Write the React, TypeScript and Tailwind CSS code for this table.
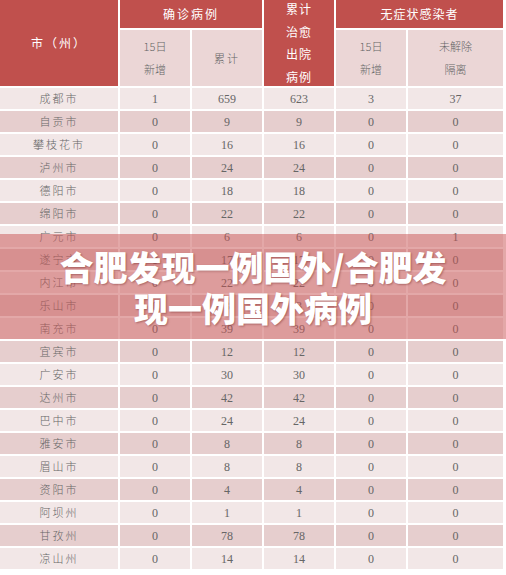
import React from "react"

interface Row {
  city: string
  newCases: number
  total: number
  cured: number
  asymNew: number
  asymIso: number
}

const rows: Row[] = [
  { city: "成都市", newCases: 1, total: 659, cured: 623, asymNew: 3, asymIso: 37 },
  { city: "自贡市", newCases: 0, total: 9, cured: 9, asymNew: 0, asymIso: 0 },
  { city: "攀枝花市", newCases: 0, total: 16, cured: 16, asymNew: 0, asymIso: 0 },
  { city: "泸州市", newCases: 0, total: 24, cured: 24, asymNew: 0, asymIso: 0 },
  { city: "德阳市", newCases: 0, total: 18, cured: 18, asymNew: 0, asymIso: 0 },
  { city: "绵阳市", newCases: 0, total: 22, cured: 22, asymNew: 0, asymIso: 0 },
  { city: "广元市", newCases: 0, total: 6, cured: 6, asymNew: 0, asymIso: 1 },
  { city: "遂宁市", newCases: 0, total: 17, cured: 17, asymNew: 0, asymIso: 0 },
  { city: "内江市", newCases: 0, total: 22, cured: 22, asymNew: 0, asymIso: 0 },
  { city: "乐山市", newCases: 0, total: 3, cured: 3, asymNew: 0, asymIso: 0 },
  { city: "南充市", newCases: 0, total: 39, cured: 39, asymNew: 0, asymIso: 0 },
  { city: "宜宾市", newCases: 0, total: 12, cured: 12, asymNew: 0, asymIso: 0 },
  { city: "广安市", newCases: 0, total: 30, cured: 30, asymNew: 0, asymIso: 0 },
  { city: "达州市", newCases: 0, total: 42, cured: 42, asymNew: 0, asymIso: 0 },
  { city: "巴中市", newCases: 0, total: 24, cured: 24, asymNew: 0, asymIso: 0 },
  { city: "雅安市", newCases: 0, total: 8, cured: 8, asymNew: 0, asymIso: 0 },
  { city: "眉山市", newCases: 0, total: 8, cured: 8, asymNew: 0, asymIso: 0 },
  { city: "资阳市", newCases: 0, total: 4, cured: 4, asymNew: 0, asymIso: 0 },
  { city: "阿坝州", newCases: 0, total: 1, cured: 1, asymNew: 0, asymIso: 0 },
  { city: "甘孜州", newCases: 0, total: 78, cured: 78, asymNew: 0, asymIso: 0 },
  { city: "凉山州", newCases: 0, total: 14, cured: 14, asymNew: 0, asymIso: 0 },
]

const cjk = "font-['SimSun','Noto_Sans_CJK_SC',sans-serif]"
const num = "font-['Liberation_Serif','Noto_Sans_CJK_SC',serif]"

export default function App() {
  return (
    <div className="relative w-[506px] h-[575px] bg-white overflow-hidden">
      <div className="grid w-[503px] grid-cols-[118px_70px_70px_70px_70px_95px] grid-rows-[28px_56px] auto-rows-[21px] gap-[2px] bg-white">
        {/* header */}
        <div className={`row-span-2 bg-[#c0504d] flex items-center justify-center text-white text-[12px] tracking-[2px] ${cjk}`}>
          市（州）
        </div>
        <div className={`col-span-2 bg-[#c0504d] flex items-center justify-center text-white text-[12px] tracking-[2px] ${cjk}`}>
          确诊病例
        </div>
        <div className={`row-span-2 bg-[#c0504d] flex flex-col items-center justify-center text-white text-[12px] leading-[22.5px] tracking-[1px] ${cjk}`}>
          <span>累计</span>
          <span>治愈</span>
          <span>出院</span>
          <span>病例</span>
        </div>
        <div className={`col-span-2 bg-[#c0504d] flex items-center justify-center text-white text-[12px] tracking-[1px] ${cjk}`}>
          无症状感染者
        </div>
        <div className={`bg-[#ebd6d6] flex flex-col items-center justify-center text-[#666] font-light text-[11px] leading-[23px] ${cjk}`}>
          <span>15日</span>
          <span>新增</span>
        </div>
        <div className={`bg-[#ebd6d6] flex items-center justify-center text-[#666] font-light text-[11px] tracking-[2px] ${cjk}`}>
          累计
        </div>
        <div className={`bg-[#ebd6d6] flex flex-col items-center justify-center text-[#666] font-light text-[11px] leading-[23px] ${cjk}`}>
          <span>15日</span>
          <span>新增</span>
        </div>
        <div className={`bg-[#ebd6d6] flex flex-col items-center justify-center text-[#666] font-light text-[11px] leading-[23px] ${cjk}`}>
          <span>未解除</span>
          <span>隔离</span>
        </div>

        {/* body */}
        {rows.map((r, i) => {
          const bg = i % 2 === 0 ? "bg-[#f2e7e7]" : "bg-[#e6cece]"
          const cell = `${bg} flex items-center justify-center text-[#666]`
          return (
            <React.Fragment key={r.city}>
              <div className={`${cell} text-[11px] font-light tracking-[2px] ${cjk}`}>{r.city}</div>
              <div className={`${cell} text-[12px] ${num}`}>{r.newCases}</div>
              <div className={`${cell} text-[12px] ${num}`}>{r.total}</div>
              <div className={`${cell} text-[12px] ${num}`}>{r.cured}</div>
              <div className={`${cell} text-[12px] ${num}`}>{r.asymNew}</div>
              <div className={`${cell} text-[12px] ${num}`}>{r.asymIso}</div>
            </React.Fragment>
          )
        })}
      </div>

      {/* title banner */}
      <div className="absolute left-0 top-[234px] w-[506px] h-[105px] bg-[#c85252]/50 flex items-center justify-center">
        <p className="text-center text-white text-[34px] leading-[41px] font-black font-['Noto_Sans_CJK_SC',sans-serif] [text-shadow:1px_1px_2px_rgba(80,0,0,0.35)]">
          合肥发现一例国外/合肥发
          <br />
          现一例国外病例
        </p>
      </div>
    </div>
  )
}
